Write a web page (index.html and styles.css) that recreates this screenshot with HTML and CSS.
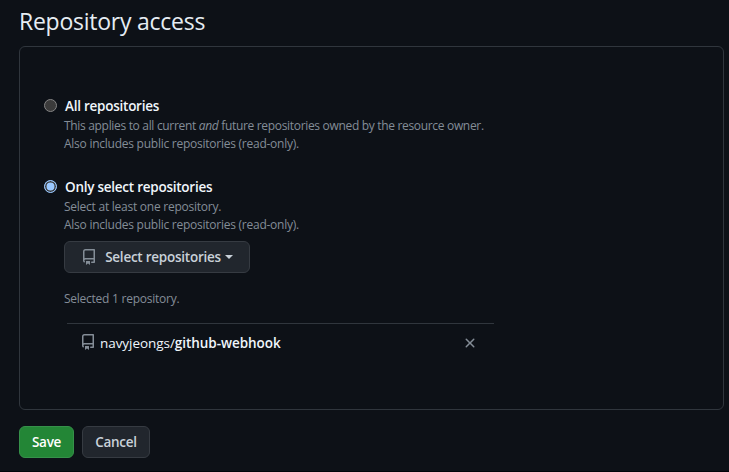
FILE: index.html
```
<!DOCTYPE html>
<html lang="en">
<head>
    <meta charset="UTF-8">
    <meta name="viewport" content="width=device-width, initial-scale=1.0">
    <title>Repository access</title>
    <link rel="stylesheet" href="styles.css">
</head>
<body>
    <form class="access">
        <h2>Repository access</h2>
        <div class="box">
            <div class="option">
                <span class="radio"></span>
                <div class="content">
                    <label>All repositories</label>
                    <p class="note long">This applies to all current <em>and</em> future repositories owned by the resource owner.</p>
                    <p class="note">Also includes public repositories (read-only).</p>
                </div>
            </div>
            <div class="option">
                <span class="radio checked"></span>
                <div class="content">
                    <label>Only select repositories</label>
                    <p class="note">Select at least one repository.</p>
                    <p class="note">Also includes public repositories (read-only).</p>
                    <button type="button" class="btn select">
                        <svg class="repo" width="16" height="16" viewBox="0 0 16 16"><path d="M2 2.5A2.5 2.5 0 014.5 0h8.75a.75.75 0 01.75.75v12.5a.75.75 0 01-.75.75h-2.5a.75.75 0 110-1.5h1.75v-2h-8a1 1 0 00-.714 1.7.75.75 0 01-1.072 1.05A2.495 2.495 0 012 11.5v-9zm10.5-1V9h-8c-.356 0-.694.074-1 .208V2.5a1 1 0 011-1h8zM5 12.25v3.25a.25.25 0 00.4.2l1.45-1.087a.25.25 0 01.3 0L8.6 15.7a.25.25 0 00.4-.2v-3.25a.25.25 0 00-.25-.25h-3.5a.25.25 0 00-.25.25z"/></svg>
                        <span>Select repositories</span>
                        <i class="caret"></i>
                    </button>
                    <p class="note count">Selected 1 repository.</p>
                    <div class="repo-row">
                        <svg class="repo" width="16" height="16" viewBox="0 0 16 16"><path d="M2 2.5A2.5 2.5 0 014.5 0h8.75a.75.75 0 01.75.75v12.5a.75.75 0 01-.75.75h-2.5a.75.75 0 110-1.5h1.75v-2h-8a1 1 0 00-.714 1.7.75.75 0 01-1.072 1.05A2.495 2.495 0 012 11.5v-9zm10.5-1V9h-8c-.356 0-.694.074-1 .208V2.5a1 1 0 011-1h8zM5 12.25v3.25a.25.25 0 00.4.2l1.45-1.087a.25.25 0 01.3 0L8.6 15.7a.25.25 0 00.4-.2v-3.25a.25.25 0 00-.25-.25h-3.5a.25.25 0 00-.25.25z"/></svg>
                        <span class="name">navyjeongs/<b>github-webhook</b></span>
                        <svg class="remove" width="16" height="16" viewBox="0 0 16 16"><path d="M3.72 3.72a.75.75 0 011.06 0L8 6.94l3.22-3.22a.75.75 0 111.06 1.06L9.06 8l3.22 3.22a.75.75 0 11-1.06 1.06L8 9.06l-3.22 3.22a.75.75 0 01-1.06-1.06L6.94 8 3.72 4.78a.75.75 0 010-1.06z"/></svg>
                    </div>
                </div>
            </div>
        </div>
        <div class="actions">
            <button type="button" class="btn save">Save</button>
            <button type="button" class="btn cancel">Cancel</button>
        </div>
    </form>
</body>
</html>
```
FILE: styles.css
```
* {
    box-sizing: border-box;
}
body {
    margin: 0;
    height: 472px;
    background-color: #0d1117;
    border-bottom: 1px solid #010409;
    color: #e6edf3;
    font-family: "Open Sans", "Noto Sans", sans-serif;
    font-size: 14px;
    line-height: 21px;
    overflow: hidden;
}
.access {
    padding: 3px 5px 0 19px;
}
h2 {
    margin: 0 0 7px;
    font-size: 23px;
    font-weight: 400;
    line-height: 36px;
    letter-spacing: -0.25px;
}
.box {
    height: 364px;
    padding: 49px 24px 0;
    border: 1px solid #30363d;
    border-radius: 6px;
}
.option {
    display: flex;
    height: 81px;
}
.radio {
    width: 13px;
    height: 13px;
    margin: 3px 8px 0 0;
    border: 1px solid #858585;
    border-radius: 50%;
    background-color: #3b3b3b;
}
.radio.checked {
    border-color: #99c8ff;
    background-color: #99c8ff;
    box-shadow: inset 0 0 0 1.5px #3b3b3b;
}
label {
    display: block;
    color: #f0f6fc;
    font-size: 13.5px;
    font-weight: 650;
    letter-spacing: -0.25px;
}
.note {
    margin: 0 0 0 -1px;
    color: #848d97;
    font-size: 12px;
    line-height: 18px;
    letter-spacing: -0.25px;
}
.note.long {
    letter-spacing: -0.32px;
}
.btn {
    display: flex;
    align-items: center;
    justify-content: center;
    height: 32px;
    padding: 0;
    border: 1px solid #363b42;
    border-radius: 6px;
    background-color: #21262d;
    color: #c9d1d9;
    font-family: inherit;
    font-size: 13.5px;
    font-weight: 650;
    letter-spacing: -0.25px;
}
.repo {
    fill: #848d97;
    fill-rule: evenodd;
}
.select {
    width: 186px;
    margin: 7px 0 0 -1px;
}
.select .repo {
    margin-right: 8px;
}
.caret {
    margin-left: 4px;
    border: 4px solid transparent;
    border-top-color: #c9d1d9;
    border-bottom: 0;
}
.count {
    margin-top: 17px;
}
.repo-row {
    display: flex;
    align-items: center;
    width: 427px;
    height: 38px;
    margin: 15px 0 0 2px;
    padding: 0 16px 0 13px;
    border-top: 1px solid #30363d;
}
.repo-row .repo {
    margin-bottom: 2px;
}
.repo-row .name {
    margin-left: 4px;
    padding-top: 2px;
    color: #f0f6fc;
    font-size: 13.5px;
    letter-spacing: -0.05px;
}
.name b {
    font-weight: 650;
}
.remove {
    margin-left: auto;
    fill: #848d97;
}
.actions {
    display: flex;
    gap: 8px;
    margin-top: 16px;
}
.save {
    width: 55px;
    border-color: #36914a;
    background-color: #238636;
    color: #fff;
}
.cancel {
    width: 68px;
}
```
